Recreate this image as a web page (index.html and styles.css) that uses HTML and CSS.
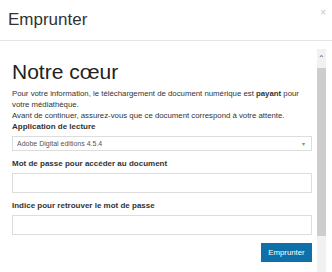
FILE: index.html
```html
<!DOCTYPE html>
<html lang="fr">
<head>
    <meta charset="UTF-8">
    <title>Emprunter</title>
    <link rel="stylesheet" href="styles.css">
</head>
<body>
    <div class="modal">
        <div class="modal-header">
            <h4 class="modal-title">Emprunter</h4>
            <span class="close">&times;</span>
        </div>

        <div class="modal-body">
            <div class="content">
                <h1>Notre cœur</h1>
                <p>Pour votre information, le téléchargement de document numérique est <b>payant</b> pour votre médiathèque.<br>
                Avant de continuer, assurez-vous que ce document correspond à votre attente.</p>

                <div class="form-group first">
                    <label>Application de lecture</label>
                    <div class="select">
                        <span>Adobe Digital editions 4.5.4</span>
                        <span class="caret">&#9662;</span>
                    </div>
                </div>

                <div class="form-group">
                    <label>Mot de passe pour accéder au document</label>
                    <input type="text">
                </div>

                <div class="form-group">
                    <label>Indice pour retrouver le mot de passe</label>
                    <input type="text">
                </div>

                <div class="actions">
                    <button class="btn-primary">Emprunter</button>
                </div>
            </div>

            <div class="scrollbar">
                <div class="scroll-up">&#8963;</div>
                <div class="scroll-thumb"></div>
            </div>
        </div>
    </div>
</body>
</html>
```

FILE: styles.css
```css
body {
    margin: 0;
    font-family: "Liberation Sans", Arial, sans-serif;
    color: #333;
    background-color: #fff;
}

.modal {
    width: 332px;
    height: 272px;
    overflow: hidden;
}

.modal-header {
    height: 40px;
    border-bottom: 1px solid #e5e5e5;
    padding: 0 8px;
    display: flex;
    justify-content: space-between;
    align-items: center;
}

.modal-title {
    margin: 0;
    font-size: 17px;
    font-weight: normal;
    color: #333;
}

.close {
    align-self: flex-start;
    margin-top: 7px;
    margin-right: -2px;
    font-size: 10px;
    color: #c4c4c4;
}

.modal-body {
    display: flex;
    margin-top: 8px;
    height: 223px;
}

.content {
    flex: 1;
    padding: 0 5px 0 12px;
}

h1 {
    margin: 11px 0 0;
    font-size: 21px;
    line-height: 23px;
    font-weight: normal;
    color: #222;
}

p {
    margin: 5px 0 0;
    font-size: 7.8px;
    line-height: 11px;
}

.form-group {
    margin-top: 7px;
}

.form-group.first {
    margin-top: 0;
}

label {
    display: block;
    font-size: 8px;
    line-height: 11px;
    font-weight: bold;
    margin-bottom: 4px;
}

.select {
    height: 13px;
    border: 1px solid #ddd;
    padding: 0 6px 0 4px;
    display: flex;
    justify-content: space-between;
    align-items: center;
    font-size: 7px;
    color: #555;
}

.select .caret {
    font-size: 6px;
    color: #888;
}

input[type="text"] {
    display: block;
    width: 100%;
    height: 20px;
    box-sizing: border-box;
    border: 1px solid #ddd;
    margin: 0;
    padding: 0 4px;
}

.actions {
    display: flex;
    justify-content: flex-end;
    margin-top: 8px;
}

.btn-primary {
    width: 51px;
    height: 19px;
    padding: 0;
    border: none;
    background-color: #0e70a8;
    color: #fff;
    font-family: "Liberation Sans", Arial, sans-serif;
    font-size: 7.8px;
}

.scrollbar {
    width: 9px;
    margin-right: 6px;
    background-color: #f1f1f1;
    display: flex;
    flex-direction: column;
}

.scroll-up {
    height: 19px;
    font-size: 8px;
    line-height: 20px;
    text-align: center;
    color: #555;
}

.scroll-thumb {
    height: 168px;
    background-color: #cdcdcd;
}
```
